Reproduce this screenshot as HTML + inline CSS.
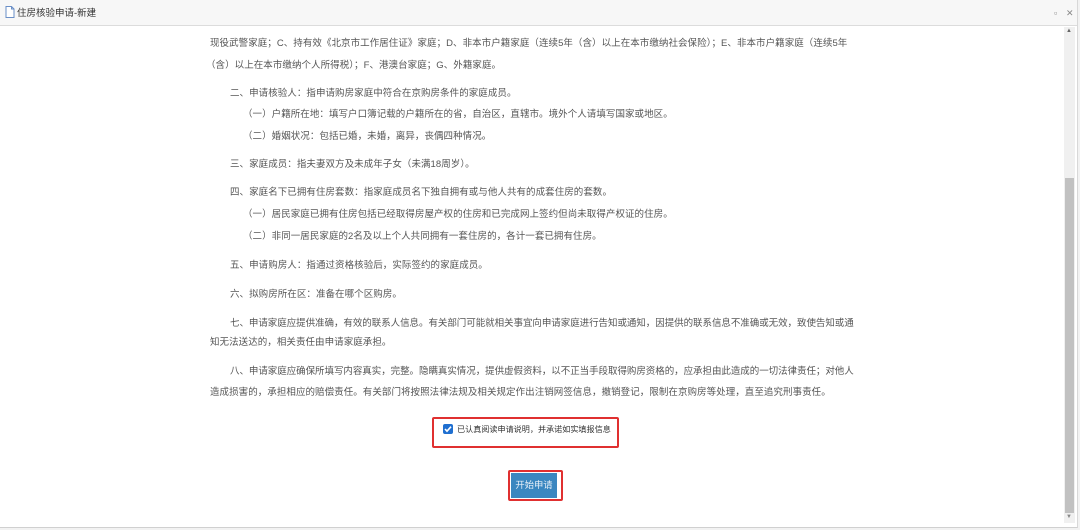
<!DOCTYPE html>
<html><head><meta charset="utf-8"><style>
body{margin:0;width:1080px;height:530px;background:#f2f2f2;font-family:"Liberation Sans","Noto Sans CJK SC",sans-serif;position:relative;overflow:hidden}
.win{position:absolute;left:0;top:0;width:1077px;height:527px;background:#fff;border-right:1px solid #d8d8d8;border-bottom:1px solid #d0d0d0}
.title{position:absolute;left:0;top:0;width:1077px;height:25px;background:#f7f7f7;border-bottom:1px solid #dcdcdc;font-size:9.5px;color:#333}
.title span{position:absolute;left:17px;top:7px;line-height:14px}
.l{position:absolute;font-size:9.5px;line-height:16px;color:#555;white-space:nowrap;letter-spacing:0.05px}
.sb{position:absolute;left:1064px;top:27px;width:11px;height:496px;background:#f0f0f0}
.th{position:absolute;left:1065px;top:178px;width:9px;height:335px;background:#c1c1c1}
</style></head><body>
<div class="win">
<div class="title">
<svg style="position:absolute;left:5px;top:6px" width="10" height="12" viewBox="0 0 10 12"><path d="M1 .5h5.5l2.5 2.5v8.5H1z" fill="#fff" stroke="#6a8fc7"/><path d="M6.5 .5v2.5h2.5" fill="none" stroke="#6a8fc7"/></svg>
<span>住房核验申请-新建</span>
<span style="left:1054px;top:6px;color:#888;font-size:9px">▫</span>
<span style="left:1066px;top:6px;color:#888;font-size:9px">✕</span>
</div>
<div class="sb"></div><div class="th"></div>
<div style="position:absolute;left:1066px;top:28px;font-size:6px;color:#666">▲</div>
<div style="position:absolute;left:1066px;top:514px;font-size:6px;color:#888">▼</div>
<div class="l" style="left:210px;top:36px">现役武警家庭；C、持有效《北京市工作居住证》家庭；D、非本市户籍家庭（连续5年（含）以上在本市缴纳社会保险）；E、非本市户籍家庭（连续5年</div>
<div class="l" style="left:206px;top:58px">（含）以上在本市缴纳个人所得税）；F、港澳台家庭；G、外籍家庭。</div>
<div class="l" style="left:230px;top:86px">二、申请核验人：指申请购房家庭中符合在京购房条件的家庭成员。</div>
<div class="l" style="left:243px;top:107px">（一）户籍所在地：填写户口簿记载的户籍所在的省，自治区，直辖市。境外个人请填写国家或地区。</div>
<div class="l" style="left:243px;top:129px">（二）婚姻状况：包括已婚，未婚，离异，丧偶四种情况。</div>
<div class="l" style="left:230px;top:157px">三、家庭成员：指夫妻双方及未成年子女（未满18周岁）。</div>
<div class="l" style="left:230px;top:185px">四、家庭名下已拥有住房套数：指家庭成员名下独自拥有或与他人共有的成套住房的套数。</div>
<div class="l" style="left:243px;top:207px">（一）居民家庭已拥有住房包括已经取得房屋产权的住房和已完成网上签约但尚未取得产权证的住房。</div>
<div class="l" style="left:243px;top:229px">（二）非同一居民家庭的2名及以上个人共同拥有一套住房的，各计一套已拥有住房。</div>
<div class="l" style="left:230px;top:258px">五、申请购房人：指通过资格核验后，实际签约的家庭成员。</div>
<div class="l" style="left:230px;top:287px">六、拟购房所在区：准备在哪个区购房。</div>
<div class="l" style="left:230px;top:316px;letter-spacing:-0.05px">七、申请家庭应提供准确，有效的联系人信息。有关部门可能就相关事宜向申请家庭进行告知或通知，因提供的联系信息不准确或无效，致使告知或通</div>
<div class="l" style="left:210px;top:335px">知无法送达的，相关责任由申请家庭承担。</div>
<div class="l" style="left:230px;top:364px;letter-spacing:-0.05px">八、申请家庭应确保所填写内容真实，完整。隐瞒真实情况，提供虚假资料，以不正当手段取得购房资格的，应承担由此造成的一切法律责任；对他人</div>
<div class="l" style="left:210px;top:385px">造成损害的，承担相应的赔偿责任。有关部门将按照法律法规及相关规定作出注销网签信息，撤销登记，限制在京购房等处理，直至追究刑事责任。</div>
<div style="position:absolute;left:432px;top:417px;width:183px;height:27px;border:2px solid #e03030;border-radius:2px"></div>
<div style="position:absolute;left:443px;top:424px;width:10px;height:10px;background:#1f6fd0;border-radius:2px"></div>
<svg style="position:absolute;left:443px;top:424px" width="10" height="10"><path d="M2 5l2 2.2 4-4.5" fill="none" stroke="#fff" stroke-width="1.6"/></svg>
<div class="l" style="left:457px;top:422px;color:#333;font-size:8.1px;letter-spacing:0">已认真阅读申请说明，并承诺如实填报信息</div>
<div style="position:absolute;left:508px;top:470px;width:51px;height:27px;border:2px solid #e03030;border-radius:2px"></div>
<div style="position:absolute;left:511px;top:473px;width:46px;height:25px;background:#3a87c0;color:#e8f0f8;font-size:9.3px;line-height:25px;text-align:center">开始申请</div>
</div>
</body></html>
